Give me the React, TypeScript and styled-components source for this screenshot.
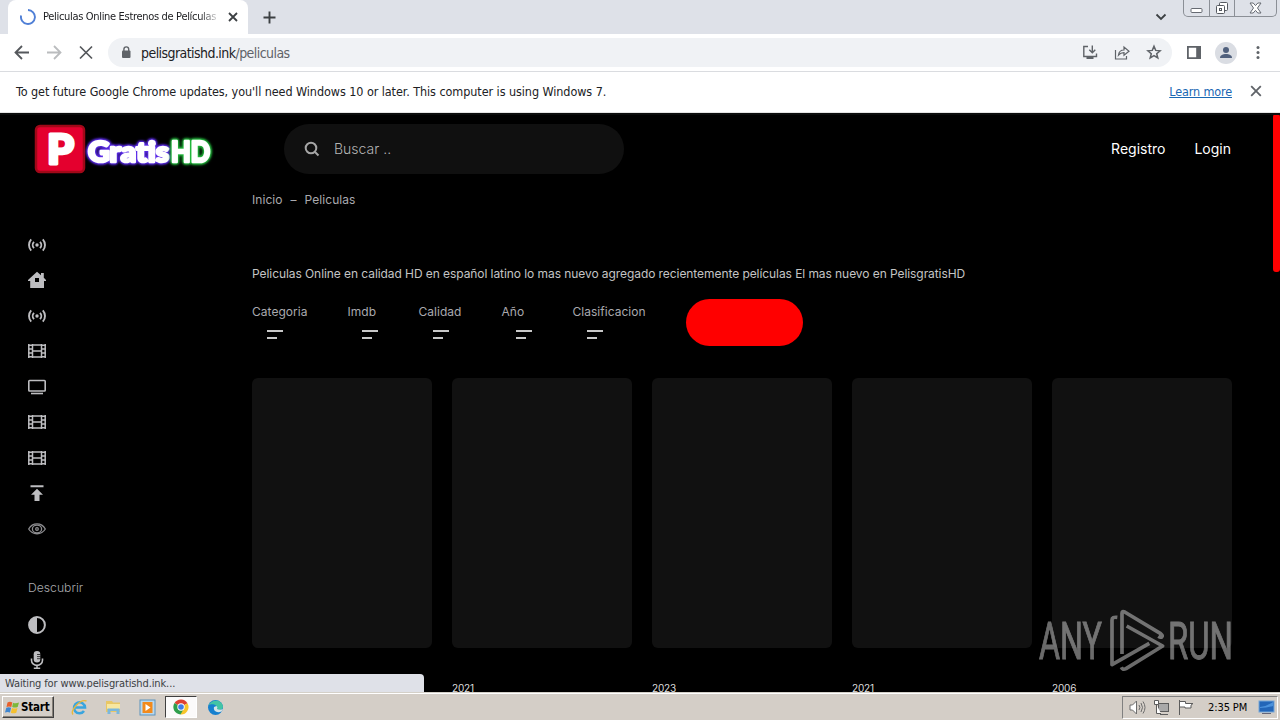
import React from 'react';
import styled, { createGlobalStyle, css } from 'styled-components';

const GlobalStyle = createGlobalStyle`
  * {
    box-sizing: border-box;
  }
  body {
    margin: 0;
    overflow: hidden;
    background: #000;
  }
`;

const uiFont = css`
  font-family: 'DejaVu Sans Condensed', 'DejaVu Sans', sans-serif;
  font-stretch: condensed;
`;

const Screen = styled.div`
  position: relative;
  display: flex;
  flex-direction: column;
  width: 1280px;
  height: 720px;
  overflow: hidden;
  background: #000;
  white-space: nowrap;
`;

const Svg = styled.svg`
  display: block;
  flex: none;
`;

// ---------- browser ----------

const TabStrip = styled.div`
  display: flex;
  align-items: center;
  flex: none;
  height: 34px;
  padding-left: 8px;
  background: #dee1e8;
`;

const Tab = styled.div`
  display: flex;
  align-items: center;
  width: 240px;
  height: 34px;
  padding: 0 10px 0 12px;
  border-radius: 8px 8px 0 0;
  background: #fff;
`;

const TabTitle = styled.div`
  ${uiFont}
  width: 178px;
  margin: 0 7px 0 7px;
  overflow: hidden;
  font-size: 11px;
  line-height: 16px;
  letter-spacing: -0.32px;
  color: #202124;
  mask-image: linear-gradient(to right, #000 88%, transparent);
`;

const NewTab = styled(Svg)`
  margin-left: 15px;
`;

const TabSearch = styled(Svg)`
  margin: 0 1px 0 auto;
`;

const WindowButtons = styled.div`
  display: flex;
  align-self: flex-start;
  height: 17px;
  margin: 0 3px 0 15px;
  border: 1px solid #8b8f96;
  border-top: 0;
  border-radius: 0 0 5px 5px;
`;

const WindowButton = styled.div<{ $width: number }>`
  display: flex;
  align-items: center;
  justify-content: center;
  width: ${({ $width }) => $width}px;
  & + & {
    border-left: 1px solid #8b8f96;
  }
`;

const Toolbar = styled.div`
  display: flex;
  align-items: center;
  flex: none;
  height: 38px;
  padding: 0 12px 0 12px;
  border-bottom: 1px solid #dadce0;
  background: #fff;
`;

const NavIcons = styled.div`
  display: flex;
  gap: 12px;
  width: 96px;
`;

const Omnibox = styled.div`
  display: flex;
  align-items: center;
  width: 1064px;
  height: 29px;
  padding: 0 8px 0 11px;
  border-radius: 15px;
  background: #f0f2f5;
`;

const Url = styled.div`
  ${uiFont}
  flex: 1;
  margin-left: 8px;
  font-size: 14px;
  letter-spacing: -0.56px;
  color: #202124;
  span {
    color: #5f6368;
  }
`;

const OmniIcons = styled.div`
  display: flex;
  gap: 12px;
`;

const Avatar = styled.div`
  display: flex;
  align-items: center;
  justify-content: center;
  width: 22px;
  height: 22px;
  margin: 0 11px 0 11px;
  border-radius: 50%;
  background: #dadde3;
`;

const InfoBar = styled.div`
  ${uiFont}
  display: flex;
  align-items: center;
  flex: none;
  height: 41px;
  padding: 0 18px 2px 16px;
  background: #fff;
  border-bottom: 1px solid #e4e4e4;
  font-size: 12.5px;
  letter-spacing: -0.07px;
  color: #202124;
`;

const LearnMore = styled.a`
  margin: 0 18px 0 auto;
  letter-spacing: -0.13px;
  color: #1967b3;
  text-decoration: underline;
`;

const StatusBubble = styled.div`
  ${uiFont}
  position: absolute;
  left: 0;
  bottom: 28px;
  width: 424px;
  height: 18px;
  padding-left: 5px;
  border-radius: 0 4px 0 0;
  background: #dfe1e8;
  font-size: 11px;
  line-height: 19px;
  letter-spacing: -0.12px;
  color: #3c4043;
`;

// ---------- site ----------

const Page = styled.div`
  position: relative;
  flex: 1;
  min-height: 0;
  overflow: hidden;
  border-top: 2px solid #0b0c0c;
  font-family: Inter, sans-serif;
  color: #a9a9ae;
`;

const Scrollbar = styled.div`
  position: absolute;
  top: -1px;
  right: 0;
  width: 7px;
  height: 158px;
  border-radius: 3px;
  background: #f00;
`;

const Header = styled.header`
  display: flex;
  align-items: center;
  height: 69px;
  padding: 0 49px 2px 34px;
`;

const Search = styled.div`
  display: flex;
  align-items: center;
  width: 340px;
  height: 50px;
  margin-left: 70px;
  padding-left: 20px;
  border-radius: 25px;
  background: #101010;
  font-size: 14px;
  font-weight: 300;
  color: #b4b4b4;
  span {
    margin-left: 14px;
  }
`;

const HeaderLinks = styled.nav`
  display: flex;
  gap: 29px;
  margin-left: auto;
  font-size: 14px;
  color: #fff;
`;

const Body = styled.div`
  display: flex;
`;

const Sidebar = styled.aside`
  width: 252px;
  flex: none;
  padding: 51.7px 0 0 28px;
`;

const IconList = styled.div`
  display: flex;
  flex-direction: column;
  gap: 17.5px;
`;

const SideLabel = styled.div`
  margin: 41px 0 19px;
  font-size: 12.2px;
  line-height: 18px;
  font-weight: 300;
`;

const Main = styled.main`
  flex: 1;
  padding-top: 6px;
`;

const Breadcrumb = styled.div`
  display: flex;
  gap: 8px;
  font-size: 12px;
  line-height: 20px;
  letter-spacing: 0.06px;
`;

const Description = styled.p`
  margin: 54px 0 0;
  font-size: 12px;
  line-height: 20px;
  letter-spacing: -0.07px;
  color: #c4c4c4;
`;

const Filters = styled.div`
  display: flex;
  gap: 40px;
  height: 47px;
  margin: 15px 0 32px;
`;

const Filter = styled.div`
  padding-top: 3px;
  font-size: 12px;
  line-height: 20px;
  letter-spacing: 0.03px;
`;

const FilterLines = styled.div`
  width: 16px;
  height: 9px;
  margin: 8px 0 0 15px;
  border-top: 2px solid #c8c8c8;
  &::after {
    content: '';
    display: block;
    width: 10px;
    height: 2px;
    margin-top: 5px;
    background: #c8c8c8;
  }
`;

const ApplyButton = styled.button`
  width: 117px;
  height: 47px;
  border: 0;
  border-radius: 24px;
  background: #f00;
`;

const Cards = styled.div`
  display: grid;
  grid-template-columns: repeat(5, 180px);
  column-gap: 20px;
`;

const Poster = styled.div`
  height: 270px;
  border-radius: 6px;
  background: #111;
`;

const Year = styled.div`
  margin-top: 32px;
  font-size: 10px;
  line-height: 16px;
  letter-spacing: -0.15px;
  color: #ddd;
`;

const Watermark = styled(Svg)`
  position: absolute;
  left: 1036px;
  top: 604px;
`;

const LogoWord = styled.text<{ $glow: string }>`
  font-family: Lato, sans-serif;
  font-size: 28px;
  font-weight: 900;
  fill: #fff;
  stroke: #fff;
  stroke-width: 2.6px;
  stroke-linejoin: round;
  filter: ${({ $glow }) =>
    `drop-shadow(0 0 1px ${$glow}) drop-shadow(0 0 1px ${$glow}) drop-shadow(0 0 1px ${$glow})`};
`;

// ---------- taskbar ----------

const Taskbar = styled.div`
  ${uiFont}
  display: flex;
  align-items: center;
  flex: none;
  height: 28px;
  padding: 1px 2px 0 2px;
  border-top: 1px solid #d4d0c8;
  background: #d4cec7;
  box-shadow: inset 0 1px 0 #fff;
  font-size: 11px;
  color: #000;
`;

const StartButton = styled.div`
  display: flex;
  align-items: center;
  gap: 1px;
  width: 52px;
  height: 22px;
  padding-left: 2px;
  border: 1px solid;
  border-color: #fff #404040 #404040 #fff;
  box-shadow: inset -1px -1px 0 #868078;
  font-size: 11.5px;
  font-weight: 700;
  letter-spacing: -0.2px;
`;

const TaskIcon = styled.div<{ $active?: boolean }>`
  display: flex;
  align-items: center;
  justify-content: center;
  width: ${({ $active }) => ($active ? 32 : 34)}px;
  height: 22px;
  ${({ $active }) =>
    $active &&
    css`
      margin: 0 1px;
      border: 1px solid;
      border-color: #404040 #fff #fff #404040;
      background: #fbfafa;
    `}
`;

const TaskIcons = styled.div`
  display: flex;
  margin-left: 8px;
`;

const Tray = styled.div`
  display: flex;
  align-items: center;
  gap: 7px;
  width: 156px;
  height: 23px;
  margin-left: auto;
  padding-left: 6px;
  border: 1px solid;
  border-color: #808080 #fff #fff #808080;
`;

const Clock = styled.div`
  margin: 0 4px 0 7px;
  letter-spacing: -0.1px;
`;

// ---------- drawings ----------

const Cross = ({ size, color = '#5f6368', width = 1.8 }: { size: number; color?: string; width?: number }) => (
  <Svg width={size} height={size} viewBox="0 0 10 10">
    <path d="M1 1l8 8M9 1L1 9" stroke={color} strokeWidth={width} />
  </Svg>
);

const Logo = () => (
  <Svg width="180" height="50" viewBox="0 0 180 50">
    <rect x="2" y="2" width="48" height="46" rx="4" fill="#e4002e" stroke="#a10818" strokeWidth="2.5" />
    <text x="13" y="39.500" fontFamily="Lato" fontWeight="900" fontSize="41" textLength="27" lengthAdjust="spacingAndGlyphs" fill="#fff" stroke="#fff" strokeWidth="3" strokeLinejoin="round">
      P
    </text>
    <LogoWord x="54" y="37.500" textLength="81" lengthAdjust="spacingAndGlyphs" $glow="#5a2ae8">
      Gratis
    </LogoWord>
    <LogoWord x="137" y="37.500" textLength="39" lengthAdjust="spacingAndGlyphs" $glow="#22b83c">
      HD
    </LogoWord>
  </Svg>
);

type IconName = 'live' | 'home' | 'film' | 'tv' | 'upload' | 'eye' | 'contrast' | 'mic';

const shapes: Record<IconName, React.ReactNode> = {
  live: (
    <g fill="none" stroke="#bdbdc0" strokeWidth="1.9">
      <circle cx="9" cy="9" r="1.7" fill="#bdbdc0" stroke="none" />
      <path d="M6 5.800a4.600 4.600 0 0 0 0 6.400M12 5.800a4.600 4.600 0 0 1 0 6.400M3.200 3.300a8.500 8.500 0 0 0 0 11.400M14.800 3.300a8.500 8.500 0 0 1 0 11.400" />
    </g>
  ),
  home: (
    <path
      fill="#bdbdc0"
      fillRule="evenodd"
      d="M9 .8l4 3.500V2h2.800v4.800L18 9v1h-2v7H2.200v-7H0V9zM7 7v4h4V7z"
    />
  ),
  film: (
    <g fill="none" stroke="#bdbdc0" strokeWidth="1.5">
      <path d="M.8 2v14M17.200 2v14M4.500 2v14M13.500 2v14M4.500 3h9M4.500 9h9M4.500 15h9M0 3.200h4M0 7h4M0 11h4M0 14.800h4M14 3.200h4M14 7h4M14 11h4M14 14.800h4" />
    </g>
  ),
  tv: (
    <g fill="none" stroke="#bdbdc0" strokeWidth="1.6">
      <rect x=".8" y="2.500" width="16.400" height="10.500" rx=".8" />
      <path d="M3 15.500h12" />
    </g>
  ),
  upload: <path fill="#bdbdc0" d="M2.500 1.300h13v2h-13zM9 4.800l6 6h-3.500V17h-5v-6.200H3z" />,
  eye: (
    <g fill="none" stroke="#8d8d90" strokeWidth="1.3">
      <path d="M.7 9C4.500 2.200 13.500 2.200 17.300 9 13.500 15.300 4.500 15.300.7 9z" />
      <ellipse cx="9" cy="9" rx="4.600" ry="3.900" />
      <circle cx="9" cy="9" r="1.300" />
    </g>
  ),
  contrast: (
    <g>
      <circle cx="9" cy="9" r="7.900" fill="none" stroke="#bdbdc0" strokeWidth="2" />
      <path d="M9 1a8 8 0 0 0 0 16z" fill="#bdbdc0" />
    </g>
  ),
  mic: (
    <g>
      <rect x="5.700" y="0" width="6.600" height="11.500" rx="3.300" fill="#bdbdc0" />
      <path d="M9 3.500h3.500M9 5.600h3.500M9 7.700h3.500" stroke="#000" strokeWidth=".7" />
      <path d="M3.500 7.500v1.700a5.500 5.200 0 0 0 11 0V7.500M9 14.500v2.500M5.800 17.200h6.400" fill="none" stroke="#bdbdc0" strokeWidth="1.600" />
    </g>
  ),
};

const SideIcon = ({ name }: { name: IconName }) => (
  <Svg width="18" height="18" viewBox="0 0 18 18">
    {shapes[name]}
  </Svg>
);

const menu: IconName[] = ['live', 'home', 'live', 'film', 'tv', 'film', 'film', 'upload', 'eye'];
const filters = ['Categoria', 'Imdb', 'Calidad', 'Año', 'Clasificacion'];
const years = ['', '2021', '2023', '2021', '2006'];

const Browser = () => (
  <>
    <TabStrip>
      <Tab>
        <Svg width="16" height="16" viewBox="0 0 16 16">
          <path d="M8 1a7 7 0 1 1-6.900 5.500" fill="none" stroke="#4f7fd6" strokeWidth="1.900" />
        </Svg>
        <TabTitle>Peliculas Online Estrenos de Películas</TabTitle>
        <Cross size={10} color="#3c4043" />
      </Tab>
      <NewTab width="13" height="13" viewBox="0 0 13 13">
        <path d="M6.500 .5v12M.5 6.500h12" stroke="#3c4043" strokeWidth="1.900" />
      </NewTab>
      <TabSearch width="12" height="8" viewBox="0 0 12 8">
        <path d="M1.500 1.500L6 6l4.500-4.500" fill="none" stroke="#3c4043" strokeWidth="1.800" />
      </TabSearch>
      <WindowButtons>
        <WindowButton $width={25}>
          <Svg width="13" height="12" viewBox="0 0 13 12">
            <rect x="1" y="6.500" width="11" height="4" rx="1" fill="#fff" stroke="#666a72" />
          </Svg>
        </WindowButton>
        <WindowButton $width={25}>
          <Svg width="14" height="14" viewBox="0 0 14 14" fill="#fff" stroke="#555960">
            <rect x="4.500" y="1.500" width="8" height="8" rx="1" />
            <rect x="1.500" y="4.500" width="8" height="8" rx="1" />
            <rect x="4.500" y="7.500" width="2" height="2" />
          </Svg>
        </WindowButton>
        <WindowButton $width={42}>
          <Svg width="13" height="12" viewBox="0 0 13 12">
            <path d="M1 1h3.200l2.300 2.600L8.800 1H12L8.500 6l3.500 5H8.800L6.500 8.400 4.200 11H1l3.500-5z" fill="#fff" stroke="#666a72" />
          </Svg>
        </WindowButton>
      </WindowButtons>
    </TabStrip>
    <Toolbar>
      <NavIcons>
        <Svg width="20" height="20" viewBox="0 0 20 20" fill="none" stroke="#55585c" strokeWidth="1.800">
          <path d="M17 9.500H4M10 3L3.500 9.500 10 16" />
        </Svg>
        <Svg width="20" height="20" viewBox="0 0 20 20" fill="none" stroke="#babcbe" strokeWidth="1.800">
          <path d="M3 9.500h13M10 3l6.500 6.500L10 16" />
        </Svg>
        <Svg width="20" height="20" viewBox="0 0 20 20" fill="none" stroke="#55585c" strokeWidth="1.700">
          <path d="M4 3.500l12 12M16 3.500l-12 12" />
        </Svg>
      </NavIcons>
      <Omnibox>
        <Svg width="14" height="14" viewBox="0 0 14 14">
          <rect x="3" y="4.500" width="8.500" height="7.500" rx="1" fill="#5f6368" />
          <path d="M4.900 5V3.300a2.400 2.400 0 0 1 4.800 0V5" fill="none" stroke="#5f6368" strokeWidth="1.400" />
        </Svg>
        <Url>
          pelisgratishd.ink<span>/peliculas</span>
        </Url>
        <OmniIcons>
          <Svg width="20" height="20" viewBox="0 0 20 20" fill="none" stroke="#5f6368" strokeWidth="1.400">
            <path d="M8 3.500H3.800V13.500H16.500v-3M12.300 2.500v7M9.300 6.800l3 3 3-3" />
            <path d="M6.500 15h7" strokeWidth="2" />
          </Svg>
          <Svg width="20" height="20" viewBox="0 0 20 20" fill="none" stroke="#5f6368" strokeWidth="1.200">
            <path d="M3.500 7v9h11V13M6.500 12c.5-3.600 2.500-5 5.500-5V4l5 4.300-5 4V9.700c-2.500 0-4 .6-5.500 2.300z" />
          </Svg>
          <Svg width="20" height="20" viewBox="0 0 20 20" fill="none" stroke="#5f6368" strokeWidth="1.500">
            <path d="M10 3.300l1.700 4.100 4.400.4-3.400 2.900 1.100 4.300-3.800-2.300-3.800 2.300 1.100-4.300-3.400-2.900 4.400-.4z" />
          </Svg>
        </OmniIcons>
      </Omnibox>
      <Svg width="32" height="16" viewBox="0 0 32 16">
        <path d="M15 1h14v13H15zM16.800 2.800v9.400h7.400V2.800z" fill="#5f6368" fillRule="evenodd" />
      </Svg>
      <Avatar>
        <Svg width="14" height="14" viewBox="0 0 14 14" fill="#50607d">
          <circle cx="7" cy="4" r="3" />
          <path d="M1 12c0-3 3-4 6-4s6 1 6 4z" />
        </Svg>
      </Avatar>
      <Svg width="20" height="16" viewBox="0 0 20 16" fill="#5f6368">
        <circle cx="10" cy="2.500" r="1.500" />
        <circle cx="10" cy="7.500" r="1.500" />
        <circle cx="10" cy="12.500" r="1.500" />
      </Svg>
    </Toolbar>
    <InfoBar>
      To get future Google Chrome updates, you'll need Windows 10 or later. This computer is using Windows 7.
      <LearnMore>Learn more</LearnMore>
      <Cross size={12} width={1.500} />
    </InfoBar>
  </>
);

const Site = () => (
  <Page>
    <Header>
      <Logo />
      <Search>
        <Svg width="16" height="16" viewBox="0 0 16 16" fill="none" stroke="#a6a6a6" strokeWidth="2">
          <circle cx="7" cy="7" r="5.300" />
          <path d="M11 11l3.500 3.500" />
        </Svg>
        <span>Buscar ..</span>
      </Search>
      <HeaderLinks>
        <span>Registro</span>
        <span>Login</span>
      </HeaderLinks>
    </Header>
    <Body>
      <Sidebar>
        <IconList>
          {menu.map((name, i) => (
            <SideIcon key={i} name={name} />
          ))}
        </IconList>
        <SideLabel>Descubrir</SideLabel>
        <IconList>
          <SideIcon name="contrast" />
          <SideIcon name="mic" />
        </IconList>
      </Sidebar>
      <Main>
        <Breadcrumb>
          <span>Inicio</span>
          <span>–</span>
          <span>Peliculas</span>
        </Breadcrumb>
        <Description>
          Peliculas Online en calidad HD en español latino lo mas nuevo agregado recientemente películas El mas nuevo en PelisgratisHD
        </Description>
        <Filters>
          {filters.map((label) => (
            <Filter key={label}>
              {label}
              <FilterLines />
            </Filter>
          ))}
          <ApplyButton />
        </Filters>
        <Cards>
          {years.map((year, i) => (
            <div key={i}>
              <Poster />
              <Year>{year}</Year>
            </div>
          ))}
        </Cards>
      </Main>
    </Body>
    <Scrollbar />
  </Page>
);

const AnyRun = () => (
  <Watermark width="200" height="72" viewBox="0 0 200 72" opacity="0.55">
    <g fontFamily="Roboto" fontSize="52" fill="#c4c4c4" stroke="#c4c4c4" strokeWidth="1">
      <text x="3" y="55" textLength="63" lengthAdjust="spacingAndGlyphs">ANY</text>
      <text x="132" y="55" textLength="65" lengthAdjust="spacingAndGlyphs">RUN</text>
    </g>
    <g transform="translate(64 0) scale(.3333)" fill="none" stroke="#c4c4c4" strokeWidth="11" strokeLinejoin="round">
      <path d="M52 40q-16-2-16 8v134l112-64" />
      <path d="M66 150V28q0-8 8-4l108 65q8 6 3 10-4 2-10-2" />
      <path d="M80 66l108 60L78 194q-10 5-14-4" />
    </g>
  </Watermark>
);

const WindowsTaskbar = () => (
  <Taskbar>
    <StartButton>
      <Svg width="15" height="15" viewBox="0 0 15 15">
        <path d="M2.500 2.500Q5 1 7.300 2.500L6.300 7Q4 5.800 1.500 7z" fill="#e8602c" />
        <path d="M8 2.800q2.500 1.200 6-.3L12.700 7q-3 1.200-5.500 0z" fill="#7db83a" />
        <path d="M1.300 7.800q2.500-1.200 4.800 0L5 12.500q-2.300-1.200-5 0z" fill="#3f86d0" />
        <path d="M7 7.900q2.500 1.200 5.500.1l-1.200 4.700q-3 1.300-5.500 0z" fill="#f5c02f" />
      </Svg>
      Start
    </StartButton>
    <TaskIcons>
      <TaskIcon>
        <Svg width="17" height="17" viewBox="0 0 17 17" fill="none">
          <path d="M13 12a5.500 5.500 0 1 1 1-3.500H4" stroke="#3aa5de" strokeWidth="2.600" />
          <path d="M2 15.500C-1 12 9-.5 15.500 2" stroke="#e9b83a" strokeWidth="1.400" />
        </Svg>
      </TaskIcon>
      <TaskIcon>
        <Svg width="17" height="16" viewBox="0 0 17 16">
          <path d="M1 2h6l1 1.500h7V13H1z" fill="#e9c765" />
          <path d="M2 5h13v5H2z" fill="#f8e7a0" />
          <path d="M2.500 15V9.500h12V15h-3v-3h-6v3z" fill="#7bb7dc" />
        </Svg>
      </TaskIcon>
      <TaskIcon>
        <Svg width="17" height="17" viewBox="0 0 17 17">
          <rect x="1" y="1" width="15" height="15" fill="#b9d8ee" stroke="#5c93bd" />
          <rect x="3.500" y="3" width="10" height="11" fill="#f28a1c" />
          <path d="M6.500 5v7l5-3.500z" fill="#fff" />
        </Svg>
      </TaskIcon>
      <TaskIcon $active>
        <Svg width="16" height="16" viewBox="0 0 16 16">
          <path d="M8 8L1.500 4A7.500 7.500 0 0 1 14.500 4.300z" fill="#df4132" />
          <path d="M8 8l6.500-3.700A7.500 7.500 0 0 1 7.500 15.500z" fill="#f7c52b" />
          <path d="M8 8L1.500 4a7.500 7.500 0 0 0 6 11.500l3.300-5.700z" fill="#2f9e4c" />
          <circle cx="8" cy="8" r="3.700" fill="#fff" />
          <circle cx="8" cy="8" r="2.800" fill="#3f7de8" />
        </Svg>
      </TaskIcon>
      <TaskIcon>
        <Svg width="17" height="17" viewBox="0 0 17 17">
          <circle cx="8.500" cy="8.500" r="7.500" fill="#1680cf" />
          <path d="M1.500 6.500C4 0 15 0 16 7.500c0 4-5 4-6 2.500C11 5 4 4 1.500 6.500z" fill="#43c4a5" />
          <path d="M7 8c-1 4 3 6.500 7.500 4.500L16 10q-3 1.500-6 0 1-2-.5-3z" fill="#d4e4e9" />
        </Svg>
      </TaskIcon>
    </TaskIcons>
    <Tray>
      <Svg width="17" height="17" viewBox="0 0 17 17" fill="#fff" stroke="#6d6d6d">
        <path d="M1 6h2.500L7.500 2v13L3.500 11H1z" />
        <path d="M10 6q1.800 2.500 0 5M12 4q3 4.500 0 9M14 2.500q4 6 0 12" fill="none" />
      </Svg>
      <Svg width="17" height="17" viewBox="0 0 17 17" fill="#fff" stroke="#5c5c5c">
        <rect x="5.500" y="4.500" width="10" height="8" fill="#a9a9a9" />
        <path d="M7 15.500h8M1.500 1.500h4v4h-4zM3.500 5.500v9H8" />
      </Svg>
      <Svg width="17" height="17" viewBox="0 0 17 17" fill="#fff" stroke="#5c5c5c">
        <path d="M2.500 1v15M2.500 2.500h6v2H16q-3 1-2 4.500H8V8H2.500z" />
      </Svg>
      <Clock>2:35 PM</Clock>
      <Svg width="17" height="16" viewBox="0 0 17 16">
        <rect x="1" y="2" width="15" height="11" fill="#2366b8" stroke="#75a6d8" />
        <path d="M2 8q7-1 13-5v4Q9 9 2 9z" fill="#4b92dc" />
        <path d="M4 14.500h9" stroke="#667" />
      </Svg>
    </Tray>
  </Taskbar>
);

const App = () => (
  <Screen>
    <GlobalStyle />
    <Browser />
    <Site />
    <WindowsTaskbar />
    <StatusBubble>Waiting for www.pelisgratishd.ink...</StatusBubble>
    <AnyRun />
  </Screen>
);

export default App;
